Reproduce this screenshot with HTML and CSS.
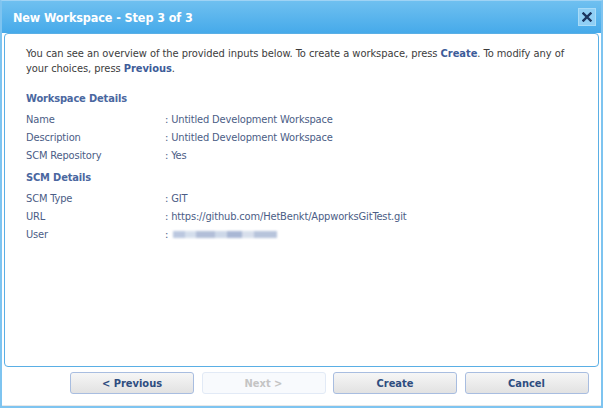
FILE: index.html
```html
<!DOCTYPE html>
<html>
<head>
<meta charset="utf-8">
<link rel="stylesheet" href="styles.css">
</head>
<body>
<div class="window">
  <div class="titlebar">
    <span class="title">New Workspace - Step 3 of 3</span>
    <span class="close"><svg width="10" height="10" viewBox="0 0 10 10"><path d="M1.5 1.5 L8.5 8.5 M8.5 1.5 L1.5 8.5" stroke="#1c3560" stroke-width="2.4" stroke-linecap="square"/></svg></span>
  </div>
  <div class="panel">
    <p class="intro">You can see an overview of the provided inputs below. To create a workspace, press <b>Create</b>. To modify any of your choices, press <b>Previous</b>.</p>
    <h2 class="section">Workspace Details</h2>
    <div class="row"><span class="label">Name</span><span class="value">: Untitled Development Workspace</span></div>
    <div class="row"><span class="label">Description</span><span class="value">: Untitled Development Workspace</span></div>
    <div class="row"><span class="label">SCM Repository</span><span class="value">: Yes</span></div>
    <h2 class="section">SCM Details</h2>
    <div class="row"><span class="label">SCM Type</span><span class="value">: GIT</span></div>
    <div class="row"><span class="label">URL</span><span class="value">: https://github.com/HetBenkt/AppworksGitTest.git</span></div>
    <div class="row"><span class="label">User</span><span class="value">: <span class="blur"></span></span></div>
  </div>
  <div class="footer">
    <button class="btn">&lt; Previous</button>
    <button class="btn disabled">Next &gt;</button>
    <button class="btn">Create</button>
    <button class="btn">Cancel</button>
  </div>
</div>
</body>
</html>
```
FILE: styles.css
```css
html, body { margin: 0; padding: 0; }
body {
  width: 603px;
  height: 408px;
  font-family: "DejaVu Sans Condensed", "DejaVu Sans", sans-serif;
  font-size: 11px;
  letter-spacing: -0.15px;
  background: #fff;
}
.window {
  box-sizing: border-box;
  width: 603px;
  height: 408px;
  border: 2px solid #7ec4f0;
  border-top: 1px solid #9fd3f5;
  display: flex;
  flex-direction: column;
  background: #fff;
}
.titlebar {
  height: 32px;
  flex: none;
  background: linear-gradient(#6fc0f0, #46aaea);
  display: flex;
  align-items: center;
  justify-content: space-between;
  padding: 0 5px 0 11px;
}
.title {
  color: #fff;
  font-weight: bold;
  font-size: 12.5px;
  letter-spacing: -0.1px;
}
.close {
  width: 16px;
  height: 16px;
  background: #90cff5;
  border: 1px solid #a8dcf8;
  display: flex;
  align-items: center;
  justify-content: center;
}
.panel {
  flex: none;
  height: 334px;
  box-sizing: border-box;
  margin: 0 2px;
  border: 1px solid #5aafe5;
  border-radius: 4px;
  background: #fff;
  padding: 12px 21px 0 21px;
  color: #3f4a5e;
}
.intro {
  margin: 0 0 15px 0;
  line-height: 15px;
  letter-spacing: -0.04px;
  color: #3c3c3c;
}
.intro b { color: #3d5c99; }
.section {
  font-size: 11px;
  font-weight: bold;
  color: #4a67a0;
  margin: 4px 0 5.5px 0;
  line-height: 15px;
}
.row {
  display: flex;
  line-height: 15px;
  height: 18.2px;
  color: #4b5d86;
}
.label { width: 139px; flex: none; }
.blur {
  display: inline-block;
  vertical-align: middle;
  width: 104px;
  height: 7px;
  margin-left: 2px;
  background: linear-gradient(90deg, #b4c2dc 0 12%, #d0dbeb 12% 22%, #aab8d4 22% 40%, #c8d4e6 40% 52%, #a0b0d0 52% 66%, #d4dcea 66% 78%, #b0bed8 78% 100%);
  filter: blur(1.2px);
  opacity: 0.9;
}
.footer {
  flex: 1;
  display: flex;
  align-items: flex-start;
  padding: 5px 0 0 68px;
  gap: 7.5px;
  border-bottom: 1px solid #e8e8e8;
}
.btn {
  width: 124px;
  height: 22px;
  border: 1px solid #a8bde0;
  border-radius: 3px;
  background: linear-gradient(#f6f6f6, #e2e2e2);
  font-family: inherit;
  font-size: 11px;
  font-weight: bold;
  color: #2e4d80;
  padding: 0;
}
.btn.disabled {
  border-color: #e2eaf6;
  background: #f8fafd;
  color: #c4c4c4;
}
```
